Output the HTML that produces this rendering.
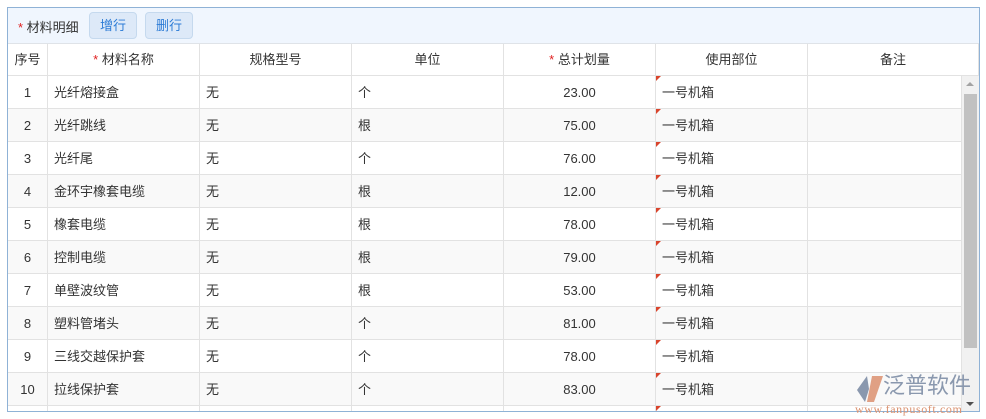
<!DOCTYPE html>
<html><head><meta charset="utf-8"><style>
*{margin:0;padding:0;box-sizing:border-box}
body{width:986px;height:419px;background:#fff;font-family:"Liberation Sans","Noto Sans CJK SC",sans-serif;font-size:13px;color:#333;position:relative;overflow:hidden}
.box{position:absolute;left:7px;top:7px;width:973px;height:405px;border:1px solid #8fb2d6;overflow:hidden}
.tb{position:absolute;left:0;top:0;width:971px;height:36px;background:#f0f6fe;border-bottom:1px solid #dfe3e8}
.lbl{position:absolute;left:10px;top:9px;font-size:13px}
.star{color:#e02020}
.btn{position:absolute;top:4px;width:48px;height:27px;border:1px solid #c5d9ee;border-radius:4px;background:#dde9f8;color:#2d7cd6;text-align:center;line-height:25px;font-size:13px}
.c{position:absolute;border-right:1px solid #e2e2e2;border-bottom:1px solid #e2e2e2;height:33px;line-height:34px;white-space:nowrap;overflow:hidden}
.h{height:32px;line-height:31px;text-align:center;background:#fff}
.tri{position:absolute;left:0;top:0;width:0;height:0;border-top:5px solid #d9442c;border-right:5px solid transparent}
.sb{position:absolute;left:954px;top:68px;width:17px;height:336px;background:#f1f1f1}
.th{position:absolute;left:2px;top:18px;width:13px;height:254px;background:#c1c1c1}
</style></head><body>
<div class="box">
<div class="tb"><span class="lbl"><span class="star">*</span> 材料明细</span>
<div class="btn" style="left:81px">增行</div><div class="btn" style="left:137px">删行</div></div>
<div id="g"></div>
<div class="sb"><div style="position:absolute;left:4px;top:6px;border-left:4px solid transparent;border-right:4px solid transparent;border-bottom:4px solid #a3a3a3"></div><div class="th"></div><div style="position:absolute;left:4px;top:326px;border-left:4px solid transparent;border-right:4px solid transparent;border-top:4px solid #505050"></div></div>
</div>
<div style="position:absolute;left:852px;top:370px;width:134px;height:49px">
<svg width="30" height="30" style="position:absolute;left:3px;top:4px"><path d="M12 2 L2 16 L10 28 L14 15 Z" fill="#8a98ae"/><path d="M17 2 L28 2 L19 28 L12 28 Z" fill="#e0a084"/></svg>
<span style="position:absolute;left:31px;top:1px;font-size:22px;line-height:30px;color:#8a98ae;white-space:nowrap">泛普软件</span>
<span style="position:absolute;left:3px;top:32px;font-family:'Liberation Serif',serif;font-size:12px;line-height:14px;color:#d9906e;letter-spacing:0.6px;white-space:nowrap">www.fanpusoft.com</span></div>
<script>
var cols=[[0,40],[40,152],[192,152],[344,152],[496,152],[648,152],[800,171]];
var hd=['序号','<span class="star">*</span> 材料名称','规格型号','单位','<span class="star">*</span> 总计划量','使用部位','备注'];
var rows=[['光纤熔接盒','个','23.00'],['光纤跳线','根','75.00'],['光纤尾','个','76.00'],['金环宇橡套电缆','根','12.00'],['橡套电缆','根','78.00'],['控制电缆','根','79.00'],['单壁波纹管','根','53.00'],['塑料管堵头','个','81.00'],['三线交越保护套','个','78.00'],['拉线保护套','个','83.00'],['','','']];
var h='';
cols.forEach(function(c,i){h+='<div class="c h" style="left:'+c[0]+'px;top:36px;width:'+c[1]+'px">'+hd[i]+'</div>';});
rows.forEach(function(r,j){var t=68+j*33,bg=j%2?'#f9f9f9':'#fff';
var v=[j<10?j+1:'',r[0],j<10?'无':'',r[1],r[2],j<10?'一号机箱':'',''];
cols.forEach(function(c,i){var w=i==6?154:c[1];var al=i==0||i==4?'center':'left';var pad=al=='left'?'padding-left:6px;':'';
h+='<div class="c" style="left:'+c[0]+'px;top:'+t+'px;width:'+w+'px;background:'+bg+';text-align:'+al+';'+pad+'">'+(i==5?'<span class="tri"></span>':'')+v[i]+'</div>';});});
document.getElementById('g').innerHTML=h;
</script>
</body></html>
